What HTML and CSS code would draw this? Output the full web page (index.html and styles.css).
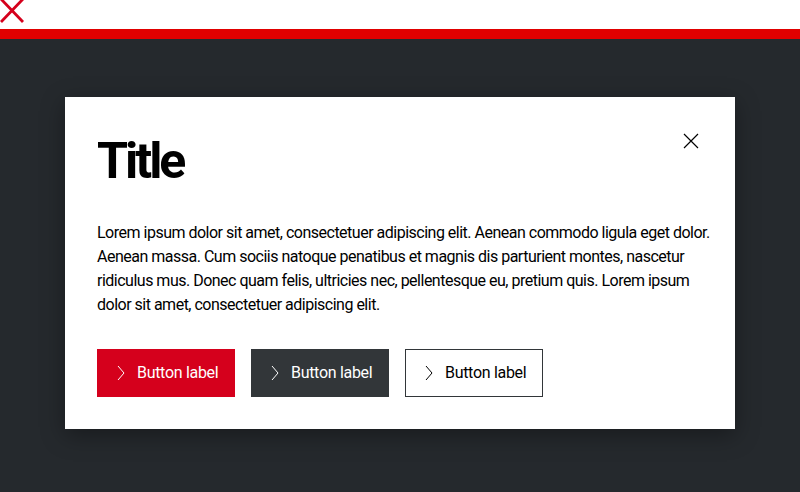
FILE: index.html
```html
<!DOCTYPE html>
<html lang="en">
<head>
<meta charset="utf-8">
<title>Modal</title>
<link rel="stylesheet" href="styles.css">
</head>
<body>
<div class="topbar">
  <svg class="top-x" width="26" height="24" viewBox="0 0 26 24" aria-hidden="true">
    <path d="M1 -1 L23 22 M23 -1 L1 22" stroke="#d5001c" stroke-width="2.8" fill="none"/>
  </svg>
</div>
<div class="redbar"></div>
<main class="stage">
  <section class="modal" role="dialog" aria-labelledby="mtitle">
    <header class="modal-head">
      <h1 id="mtitle" class="modal-title">Title</h1>
      <button class="close" aria-label="Close">
        <svg width="24" height="24" viewBox="0 0 24 24" aria-hidden="true">
          <path d="M5 5 L19 19 M19 5 L5 19" stroke="#000" stroke-width="1.2" fill="none"/>
        </svg>
      </button>
    </header>
    <p class="modal-text">Lorem ipsum dolor sit amet, consectetuer adipiscing elit. Aenean commodo ligula eget dolor.<br>Aenean massa. Cum sociis natoque penatibus et magnis dis parturient montes, nascetur<br>ridiculus mus. Donec quam felis, ultricies nec, pellentesque eu, pretium quis. Lorem ipsum<br>dolor sit amet, consectetuer adipiscing elit.</p>
    <div class="actions">
      <button class="btn btn-primary"><svg class="chev" width="24" height="24" viewBox="0 0 24 24" aria-hidden="true"><path d="M6 5 L12 12 L6 19" stroke="currentColor" stroke-width="1" fill="none"/></svg><span>Button label</span></button>
      <button class="btn btn-secondary"><svg class="chev" width="24" height="24" viewBox="0 0 24 24" aria-hidden="true"><path d="M6 5 L12 12 L6 19" stroke="currentColor" stroke-width="1" fill="none"/></svg><span>Button label</span></button>
      <button class="btn btn-tertiary"><svg class="chev" width="24" height="24" viewBox="0 0 24 24" aria-hidden="true"><path d="M6 5 L12 12 L6 19" stroke="currentColor" stroke-width="1" fill="none"/></svg><span>Button label</span></button>
    </div>
  </section>
</main>
</body>
</html>
```
FILE: styles.css
```css
* { box-sizing: border-box; }
html, body { margin: 0; padding: 0; height: 100%; }
body {
  font-family: Roboto, "Liberation Sans", sans-serif;
  background: #25292d;
  display: flex;
  flex-direction: column;
  overflow: hidden;
}
.topbar {
  height: 29px;
  background: #fff;
  flex: none;
}
.top-x { display: block; }
.redbar {
  height: 10px;
  background: #e00000;
  flex: none;
}
.stage {
  flex: 1;
  padding: 58px 65px;
}
.modal {
  width: 670px;
  background: #fff;
  padding: 32px;
  box-shadow: 0 6px 22px rgba(0, 0, 0, 0.35);
}
.modal-head {
  display: flex;
  justify-content: space-between;
  align-items: flex-start;
  margin-bottom: 28px;
}
.modal-title {
  margin: 0;
  font-size: 50px;
  line-height: 64px;
  font-weight: 700;
  letter-spacing: -3px;
  color: #000;
}
.close {
  width: 24px;
  height: 24px;
  padding: 0;
  border: 0;
  background: transparent;
  cursor: pointer;
}
.close svg { display: block; }
.modal-text {
  margin: 0 0 32px;
  font-size: 16px;
  line-height: 24px;
  letter-spacing: -0.5px;
  color: #000;
  white-space: nowrap;
}
.actions {
  display: flex;
  gap: 16px;
}
.btn {
  display: inline-flex;
  align-items: center;
  width: 138px;
  height: 48px;
  padding: 0 0 0 14px;
  border: 1px solid transparent;
  font-family: inherit;
  font-size: 16px;
  line-height: 24px;
  letter-spacing: -0.3px;
  gap: 1px;
  white-space: nowrap;
  cursor: pointer;
}
.chev { display: block; flex: none; }
.btn-primary { background: #d5001c; border-color: #d5001c; color: #fff; }
.btn-secondary { background: #323639; border-color: #323639; color: #fff; }
.btn-tertiary { background: #fff; border-color: #323639; color: #000; }
```
